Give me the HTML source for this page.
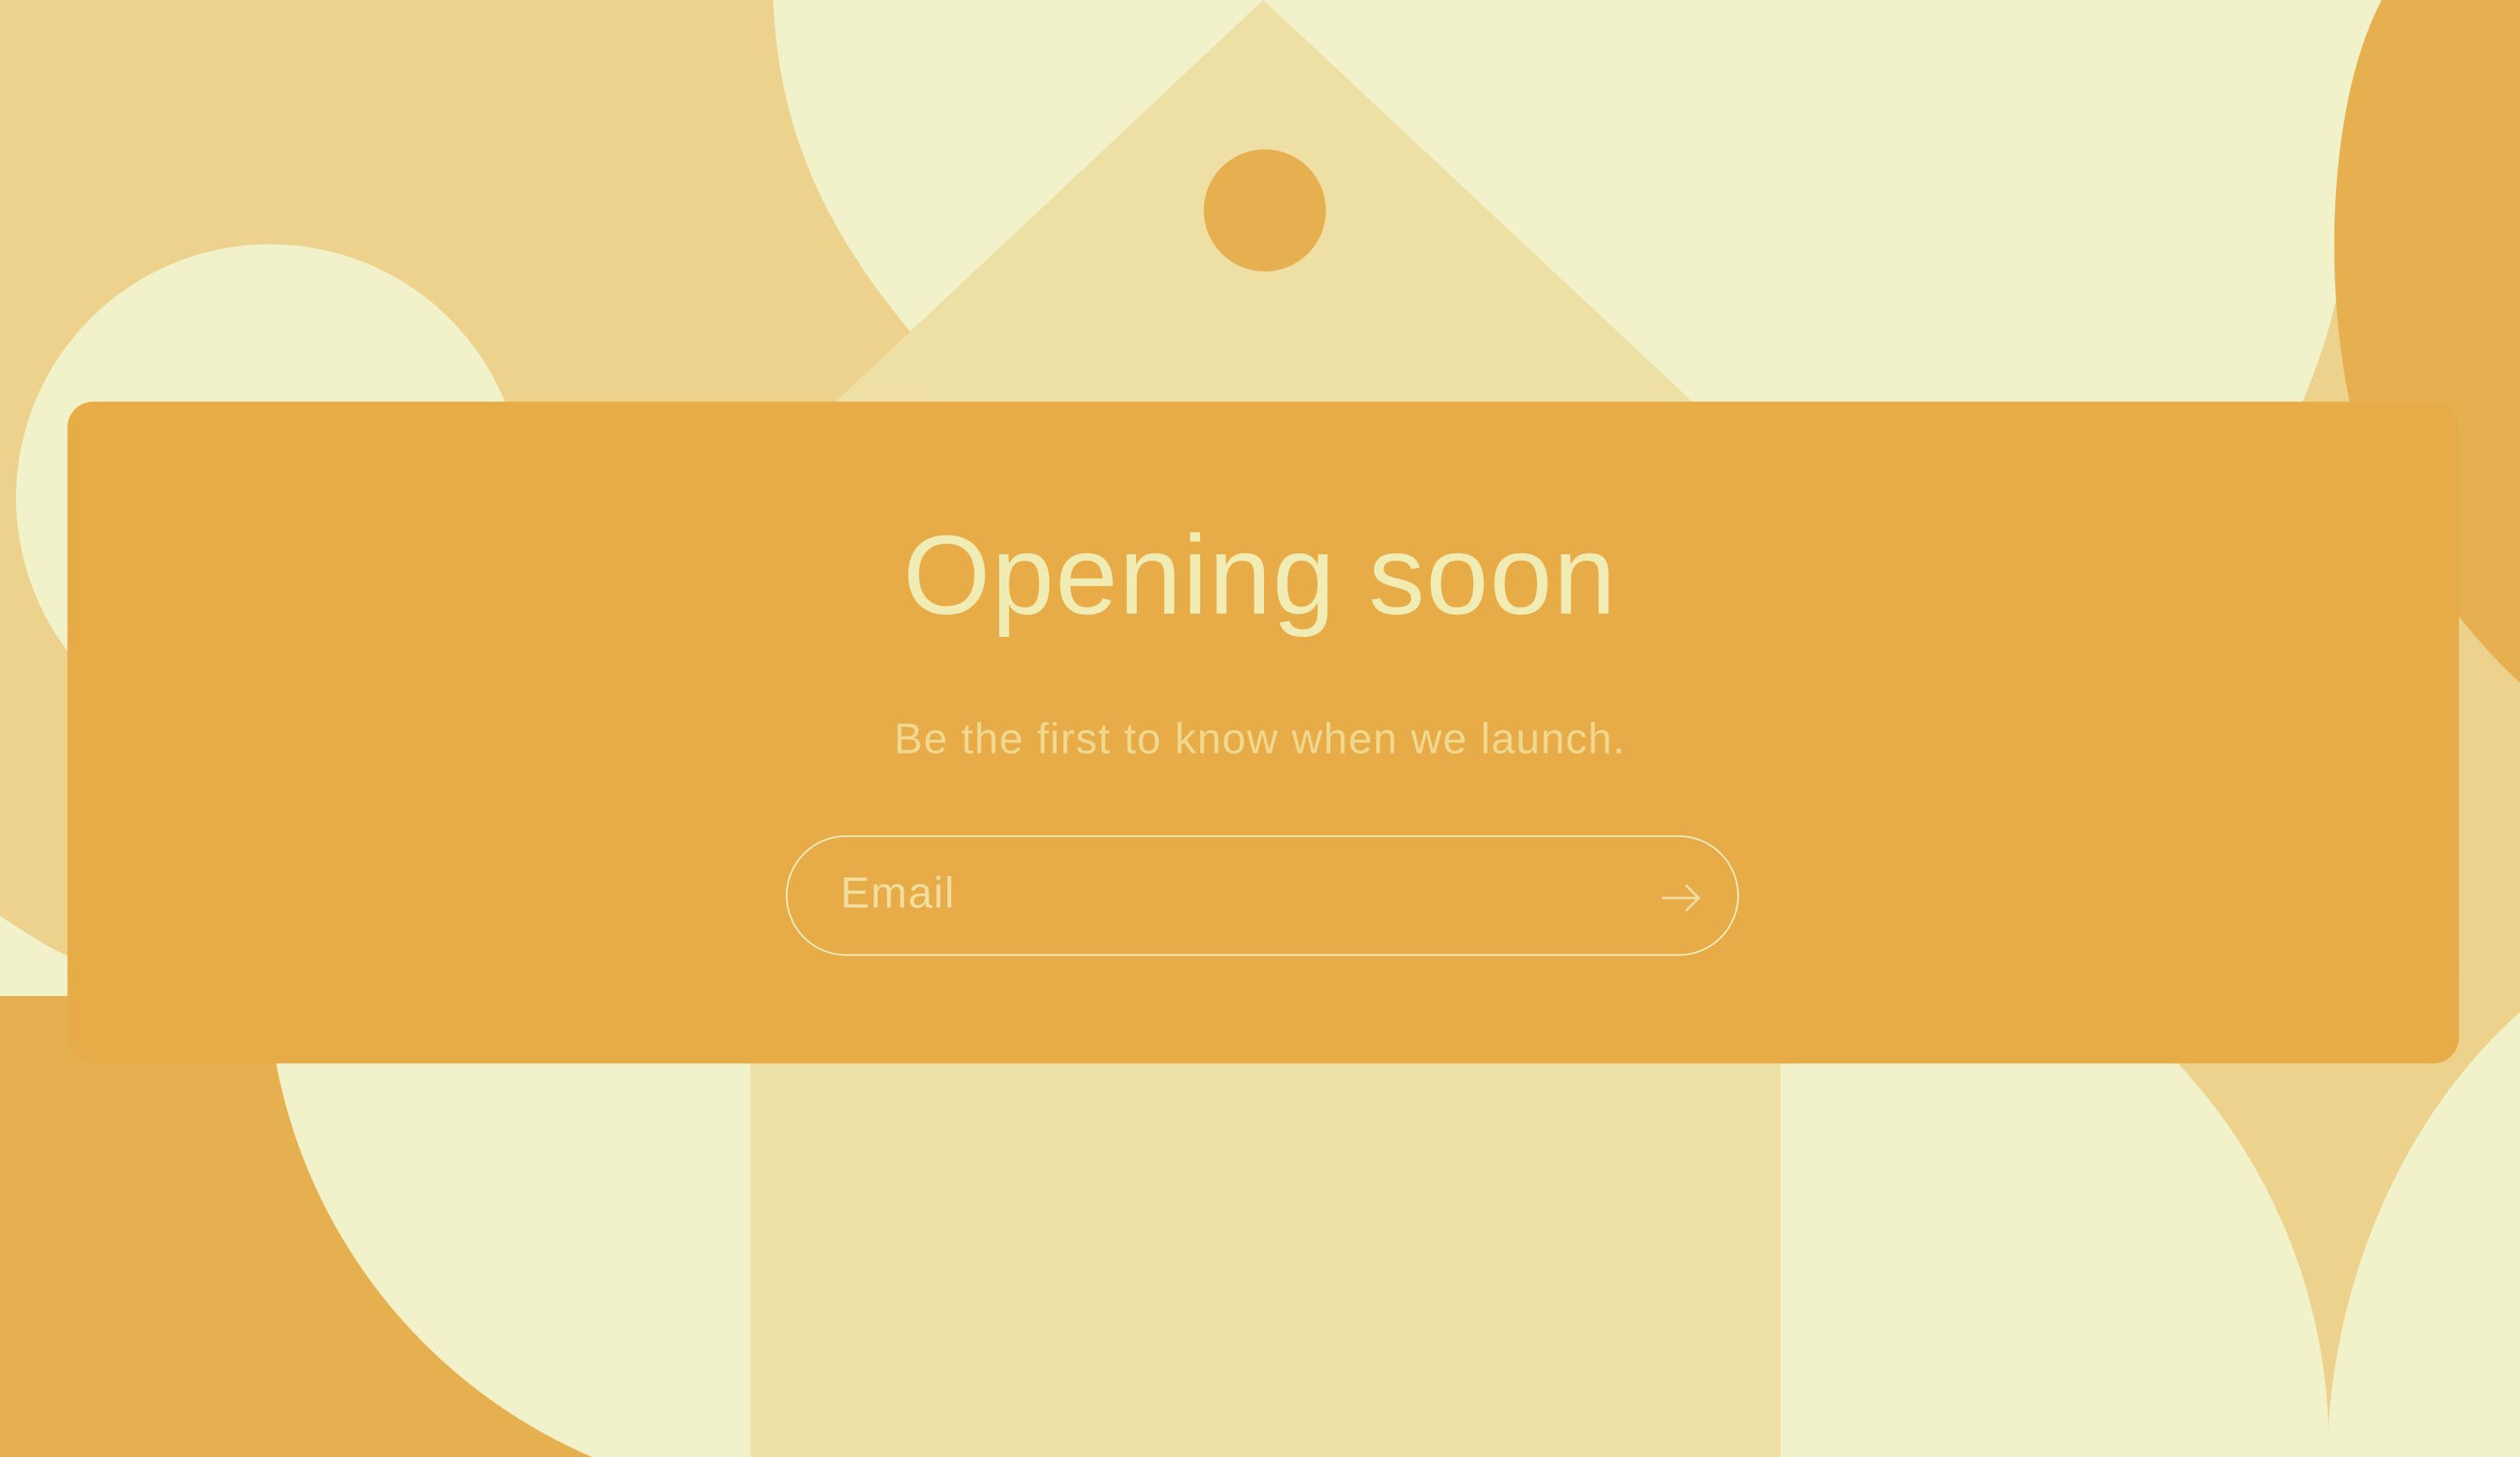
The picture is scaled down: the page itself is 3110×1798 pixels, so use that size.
<!DOCTYPE html>
<html><head><meta charset="utf-8"><style>
html,body{margin:0;padding:0;width:3110px;height:1798px;overflow:hidden;background:#F1F2C9}
#s{position:absolute;left:0;top:0;width:1568px;height:907px;overflow:hidden;transform:scale(1.98342,1.98236);transform-origin:0 0;font-family:"Liberation Sans",Arial,sans-serif}
svg{position:absolute;left:0;top:0}
.card{position:absolute;left:42px;top:250px;width:1488px;height:412px;background:#E7AC48;border-radius:16px}
h1{position:absolute;left:0;right:0;top:318px;margin:0;text-align:center;font-weight:400;font-size:70px;color:#F1ECB4;letter-spacing:0.7px}
.sub{position:absolute;left:0;right:0;top:445px;text-align:center;font-size:26.5px;color:#F1D88F;letter-spacing:0.7px}
.inp{position:absolute;left:489px;top:520px;width:591px;height:73px;border:1.5px solid #F3EDC0;border-radius:38px}
.inp span{position:absolute;left:33px;top:20px;font-size:27px;color:#F1DD9E;letter-spacing:0.8px}
</style></head><body><div id="s">
<svg width="1568" height="907" viewBox="0 0 1568 907">
<defs><clipPath id="br"><rect x="1108" y="0" width="460" height="907"/></clipPath>
<clipPath id="bl"><rect x="0" y="0" width="467" height="907"/></clipPath></defs>
<rect width="1568" height="907" fill="#F1F2C9"/>
<path d="M0 0 H481 C485 90 520 150 566 206 L600 300 L560 620 H0 Z" fill="#EDD28E"/>
<circle cx="168" cy="310" r="158" fill="#F1F2C9"/>
<path d="M0 570 C15 580 30 590 42 595 V620 H0 Z" fill="#F1F2C9"/>
<path d="M786 0 L1053 250 L520 250 Z" fill="#EEDFA4"/>
<circle cx="787" cy="131" r="38" fill="#E6B050"/>
<path d="M1455 180 L1568 150 V660 L1300 700 L1400 320 C1420 280 1445 230 1455 180 Z" fill="#EDD28E"/>
<path d="M1482 0 H1568 V425 C1540 400 1480 330 1462 250 C1445 170 1450 60 1482 0 Z" fill="#E6B050"/>
<rect x="0" y="620" width="467" height="287" fill="#E6B050"/>
<circle cx="500" cy="600" r="334" fill="#F1F2C9" clip-path="url(#bl)"/>
<rect x="467" y="600" width="641" height="307" fill="#EEDFA4"/>
<rect x="1108" y="600" width="460" height="307" fill="#F1F2C9"/>
<path d="M1300 600 H1568 V907 H1300 Z" fill="#EDD28E"/>
<circle cx="1100" cy="900" r="349" fill="#F1F2C9" clip-path="url(#br)"/>
<path d="M1449 885 C1455 800 1490 700 1568 630 V907 H1449 Z" fill="#F1F2C9"/>
<rect x="1108" y="890" width="460" height="17" fill="#F1F2C9"/>
<rect x="1108" y="600" width="200" height="307" fill="#F1F2C9"/>
</svg>
<div class="card"></div>
<h1>Opening soon</h1>
<div class="sub">Be the first to know when we launch.</div>
<div class="inp"><span>Email</span>
<svg style="left:543px;top:28px" width="26" height="20" viewBox="0 0 26 20"><path d="M1 10 H24 M16 2 L24 10 L16 18" fill="none" stroke="#F1DD9E" stroke-width="1.5"/></svg>
</div>
</div></body></html>
